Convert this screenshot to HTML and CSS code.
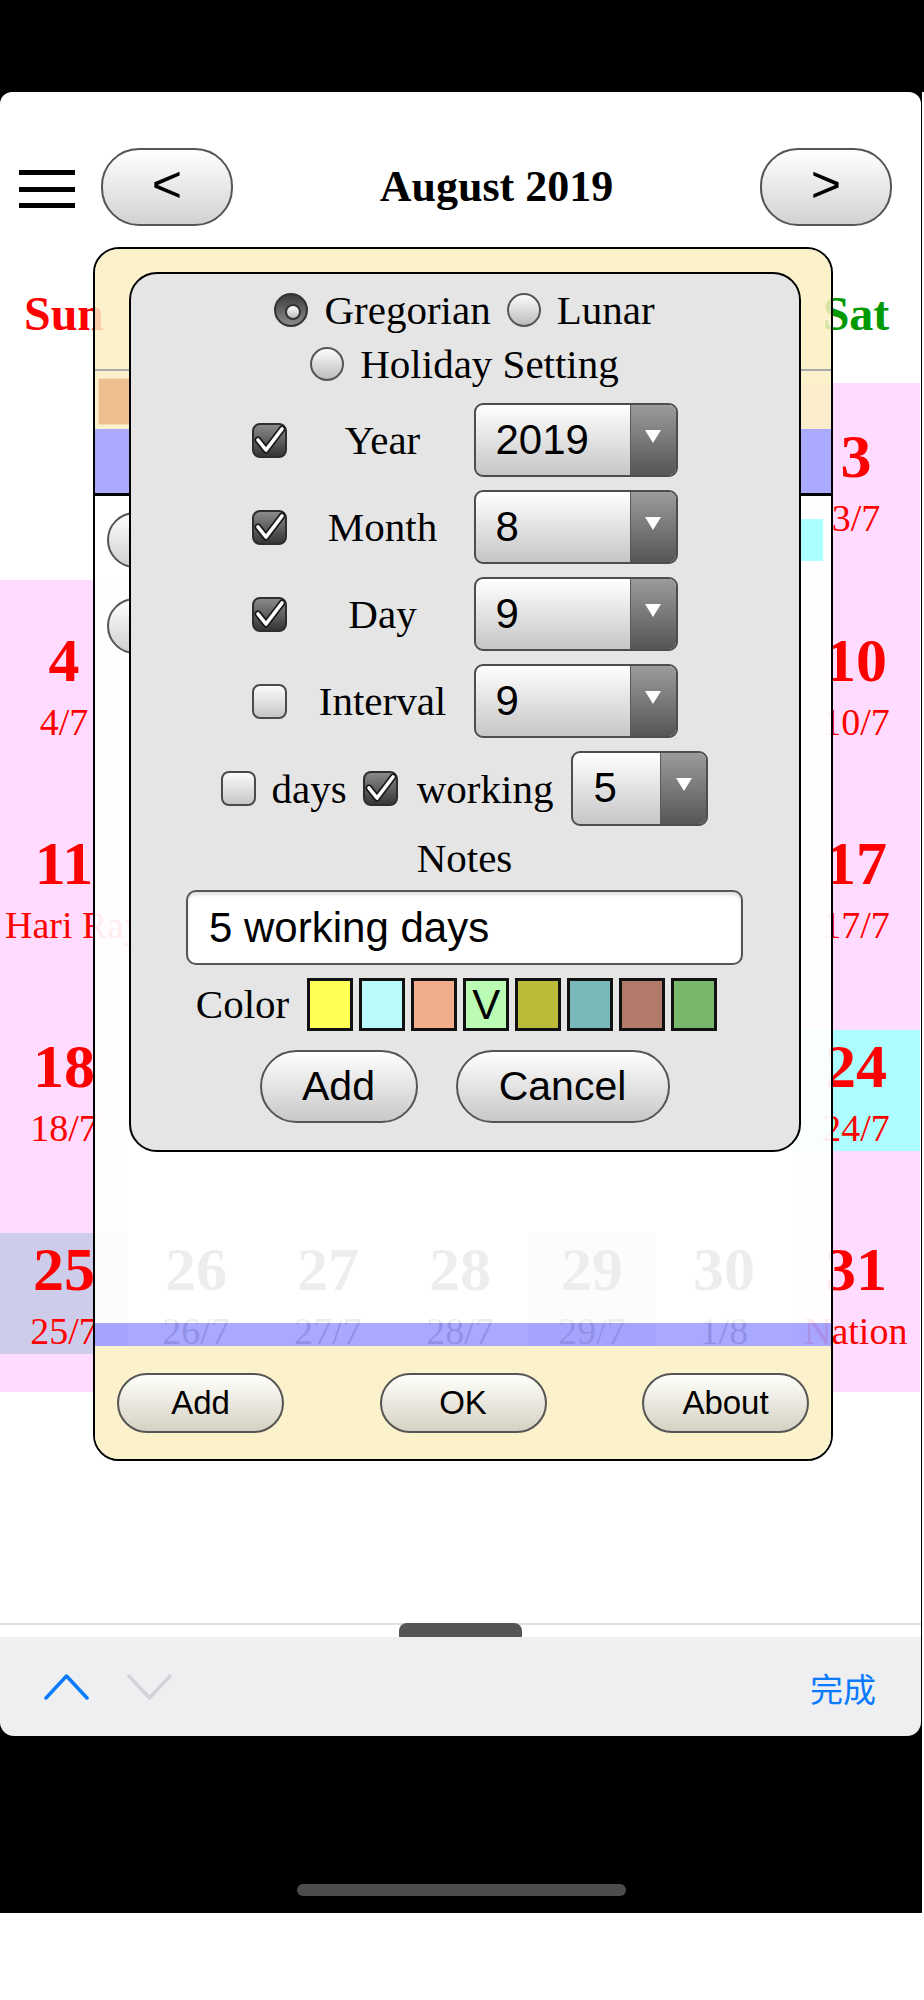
FILE: index.html
```html
<!DOCTYPE html>
<html>
<head>
<meta charset="utf-8">
<title>Calendar</title>
<link rel="stylesheet" href="styles.css">
</head>
<body>
<div class="screen">
  <div class="page">
    <header class="topbar">
      <div class="menu"><span></span><span></span><span></span></div>
      <button class="navbtn">&lt;</button>
      <h1 class="title">August 2019</h1>
      <button class="navbtn">&gt;</button>
    </header>

    <div class="weekhead">
      <div class="sun">Sun</div><div>Mon</div><div>Tue</div><div>Wed</div><div>Thu</div><div>Fri</div><div class="sat">Sat</div>
    </div>

    <div class="grid">
      <div class="cell r1"></div><div class="cell r1"></div><div class="cell r1"></div><div class="cell r1"></div>
      <div class="cell r1"><div class="day"><div class="num">1</div><div class="lun">1/7</div></div></div>
      <div class="cell r1"><div class="day"><div class="num">2</div><div class="lun">2/7</div></div></div>
      <div class="cell r1 we"><div class="day"><div class="num">3</div><div class="lun">3/7</div></div></div>

      <div class="cell we"><div class="day"><div class="num">4</div><div class="lun">4/7</div></div></div>
      <div class="cell"><div class="day"><div class="num">5</div><div class="lun">5/7</div></div></div>
      <div class="cell"><div class="day"><div class="num">6</div><div class="lun">6/7</div></div></div>
      <div class="cell"><div class="day"><div class="num">7</div><div class="lun">7/7</div></div></div>
      <div class="cell"><div class="day"><div class="num">8</div><div class="lun">8/7</div></div></div>
      <div class="cell"><div class="day"><div class="num">9</div><div class="lun">9/7</div></div></div>
      <div class="cell we"><div class="day"><div class="num">10</div><div class="lun">10/7</div></div></div>

      <div class="cell we"><div class="day"><div class="num">11</div><div class="lun">Hari Raya Haji</div></div></div>
      <div class="cell"><div class="day"><div class="num">12</div><div class="lun">12/7</div></div></div>
      <div class="cell"><div class="day"><div class="num">13</div><div class="lun">13/7</div></div></div>
      <div class="cell"><div class="day"><div class="num">14</div><div class="lun">14/7</div></div></div>
      <div class="cell"><div class="day"><div class="num">15</div><div class="lun">15/7</div></div></div>
      <div class="cell"><div class="day"><div class="num">16</div><div class="lun">16/7</div></div></div>
      <div class="cell we"><div class="day"><div class="num">17</div><div class="lun">17/7</div></div></div>

      <div class="cell we"><div class="day"><div class="num">18</div><div class="lun">18/7</div></div></div>
      <div class="cell"><div class="day"><div class="num">19</div><div class="lun">19/7</div></div></div>
      <div class="cell"><div class="day"><div class="num">20</div><div class="lun">20/7</div></div></div>
      <div class="cell"><div class="day"><div class="num">21</div><div class="lun">21/7</div></div></div>
      <div class="cell"><div class="day"><div class="num">22</div><div class="lun">22/7</div></div></div>
      <div class="cell"><div class="day"><div class="num">23</div><div class="lun">23/7</div></div></div>
      <div class="cell we"><div class="day cyan"><div class="num">24</div><div class="lun">24/7</div></div></div>

      <div class="cell we"><div class="day lav"><div class="num">25</div><div class="lun">25/7</div></div></div>
      <div class="cell"><div class="day"><div class="num">26</div><div class="lun">26/7</div></div></div>
      <div class="cell"><div class="day"><div class="num">27</div><div class="lun">27/7</div></div></div>
      <div class="cell"><div class="day"><div class="num">28</div><div class="lun">28/7</div></div></div>
      <div class="cell"><div class="day lav"><div class="num">29</div><div class="lun">29/7</div></div></div>
      <div class="cell"><div class="day"><div class="num">30</div><div class="lun">1/8</div></div></div>
      <div class="cell we"><div class="day"><div class="num">31</div><div class="lun clip">National Day</div></div></div>
    </div>

    <div class="dock"><span class="tab"></span></div>

    <div class="dialog">
      <div class="dlg-head"></div>
      <div class="dlg-tag"><span class="tagbox"></span></div>
      <div class="dlg-bar"></div>
      <div class="dlg-list">
        <div class="item"><span class="pill"></span><span class="itemcolor"></span></div>
        <div class="item"><span class="pill"></span></div>
      </div>
      <div class="dlg-bar2"></div>
      <div class="dlg-foot">
        <button class="fbtn">Add</button>
        <button class="fbtn">OK</button>
        <button class="fbtn">About</button>
      </div>

      <div class="panel">
        <div class="rline">
          <span class="radio on"></span><span class="rtext">Gregorian</span>
          <span class="radio"></span><span>Lunar</span>
        </div>
        <div class="rline">
          <span class="radio"></span><span>Holiday Setting</span>
        </div>

        <div class="opt first">
          <span class="cb on"><svg viewBox="0 0 31 31"><path d="M4 15 L12 25 L28 4"/><path class="w" d="M4 15 L12 25 L28 4"/></svg></span>
          <span class="lbl">Year</span>
          <div class="select"><span class="val">2019</span><span class="arr"></span></div>
        </div>
        <div class="opt">
          <span class="cb on"><svg viewBox="0 0 31 31"><path d="M4 15 L12 25 L28 4"/><path class="w" d="M4 15 L12 25 L28 4"/></svg></span>
          <span class="lbl">Month</span>
          <div class="select"><span class="val">8</span><span class="arr"></span></div>
        </div>
        <div class="opt">
          <span class="cb on"><svg viewBox="0 0 31 31"><path d="M4 15 L12 25 L28 4"/><path class="w" d="M4 15 L12 25 L28 4"/></svg></span>
          <span class="lbl">Day</span>
          <div class="select"><span class="val">9</span><span class="arr"></span></div>
        </div>
        <div class="opt">
          <span class="cb"></span>
          <span class="lbl">Interval</span>
          <div class="select"><span class="val">9</span><span class="arr"></span></div>
        </div>

        <div class="wrow">
          <span class="cb"></span>
          <span class="wtxt">days</span>
          <span class="cb on"><svg viewBox="0 0 31 31"><path d="M4 15 L12 25 L28 4"/><path class="w" d="M4 15 L12 25 L28 4"/></svg></span>
          <span class="wtxt wk">working</span>
          <div class="select small"><span class="val">5</span><span class="arr"></span></div>
        </div>

        <div class="notes">Notes</div>
        <input class="textbox" type="text" value="5 working days">

        <div class="colors">
          <span class="clab">Color</span>
          <span class="sw c1"></span>
          <span class="sw c2"></span>
          <span class="sw c3"></span>
          <span class="sw c4">V</span>
          <span class="sw c5"></span>
          <span class="sw c6"></span>
          <span class="sw c7"></span>
          <span class="sw c8"></span>
        </div>

        <div class="actions">
          <button class="btn add">Add</button>
          <button class="btn cancel">Cancel</button>
        </div>
      </div>
    </div>
  </div>

  <div class="accessory">
    <svg class="chev" width="45" height="26" viewBox="0 0 45 26"><polyline points="2,24 22.5,2 43,24"/></svg>
    <svg class="chev dn" width="45" height="26" viewBox="0 0 45 26"><polyline points="2,2 22.5,24 43,2"/></svg>
    <span class="done">完成</span>
  </div>
  <div class="homezone"><span></span></div>
</div>
</body>
</html>
```

FILE: styles.css
```css
* { box-sizing: border-box; }
html, body { margin: 0; }
body {
  width: 924px;
  background: linear-gradient(#000 0, #000 92px, #fff 92px) no-repeat;
  font-family: "Liberation Serif", serif;
  color: #000;
}

.screen {
  width: 922px;
  background: #000;
  padding-top: 92px;
}

.page {
  width: 921px;
  height: 1545px;
  background: #fff;
  border-radius: 12px 12px 0 0;
  position: relative;
  overflow: hidden;
  display: flex;
  flex-direction: column;
}

/* top bar */
.topbar {
  display: flex;
  align-items: center;
  height: 78px;
  margin-top: 56px;
  padding: 0 29px 0 19px;
  flex: none;
}
.menu {
  width: 56px;
  display: flex;
  flex-direction: column;
  gap: 11.5px;
  margin-right: 26px;
  margin-top: 4px;
}
.menu span { display: block; height: 5px; background: #000; }
.navbtn {
  width: 132px;
  height: 78px;
  padding: 0 0 6px;
  border: 2px solid #555;
  border-radius: 38px;
  background: linear-gradient(#ffffff, #d2d2d2);
  font: 52px/1 "Liberation Sans", sans-serif;
  color: #000;
}
.title {
  flex: 1;
  margin: 0;
  text-align: center;
  font: bold 44px/50px "Liberation Serif", serif;
}

/* calendar */
.weekhead {
  display: grid;
  grid-template-columns: repeat(7, 128px);
  column-gap: 4px;
  margin-top: 58px;
  height: 60px;
  flex: none;
  font: bold 48px/60px "Liberation Serif", serif;
  text-align: center;
}
.sun { color: #ff0000; }
.sat { color: #009900; }

.grid {
  display: grid;
  grid-template-columns: repeat(7, 128px);
  grid-template-rows: 197px repeat(4, 203px);
  column-gap: 4px;
  margin-top: 39px;
  flex: none;
}
.cell { padding-top: 44px; }
.cell.r1 { padding-top: 37px; }
.cell.we { background: #ffdcff; }
.day {
  height: 121px;
  text-align: center;
  white-space: nowrap;
}
.day.cyan { background: #adffff; }
.day.lav { background: #cdcdeb; }
.num { font: bold 62px/72px "Liberation Serif", serif; }
.lun { font: 38px/52px "Liberation Serif", serif; padding: 0 5px; }
.we .num, .we .lun { color: #ff0000; }
.lun.clip { padding: 0 0 0 12px; margin-right: 13px; overflow: hidden; text-align: left; }

.dock {
  margin-top: auto;
  height: 14px;
  flex: none;
  display: flex;
  background: linear-gradient(#e0e0e0 0, #e0e0e0 2px, #fff 2px);
}
.dock .tab {
  margin-left: 399px;
  width: 123px;
  height: 14px;
  background: #555;
  border-radius: 8px 8px 0 0;
}

/* outer dialog */
.dialog {
  position: absolute;
  left: 93px;
  top: 155px;
  width: 740px;
  height: 1214px;
  border: 2px solid #000;
  border-radius: 26px;
  overflow: hidden;
  display: flex;
  flex-direction: column;
}
.dlg-head {
  height: 122px;
  flex: none;
  background: rgba(250, 240, 195, 0.85);
  border-bottom: 2px solid #aaa;
}
.dlg-tag {
  height: 58px;
  flex: none;
  background: rgba(250, 240, 195, 0.85);
  padding: 7px 0 0 3px;
}
.tagbox {
  display: block;
  width: 60px;
  height: 47px;
  background: #efc08f;
  border: 1px solid #f6dcb4;
}
.dlg-bar {
  height: 67px;
  flex: none;
  background: #aaaaff;
  border-bottom: 3px solid #000;
}
.dlg-list {
  flex: 1;
  background: rgba(255, 255, 255, 0.93);
  padding-top: 16px;
}
.item {
  height: 56px;
  display: flex;
  align-items: center;
  margin-bottom: 30px;
}
.pill {
  margin-left: 12px;
  width: 220px;
  height: 56px;
  border: 2px solid #555;
  border-radius: 28px;
  background: linear-gradient(#ffffff, #d0d0d0);
}
.itemcolor {
  margin-left: auto;
  margin-right: 8px;
  width: 60px;
  height: 42px;
  background: #aaffff;
}
.dlg-bar2 {
  height: 23px;
  flex: none;
  background: rgba(160, 160, 255, 0.9);
}
.dlg-foot {
  height: 113px;
  flex: none;
  background: #fbf2cc;
  display: flex;
  justify-content: space-between;
  align-items: flex-start;
  padding: 27px 22px 0;
}
.fbtn {
  width: 167px;
  height: 60px;
  padding: 0;
  border: 2px solid #555;
  border-radius: 30px;
  background: linear-gradient(#fffffb, #d5d1c2);
  font: 33px/56px "Liberation Sans", sans-serif;
  color: #000;
}

/* inner panel */
.panel {
  position: absolute;
  left: 33.5px;
  top: 23px;
  width: 672px;
  height: 880px;
  background: #e5e5e5;
  border: 2px solid #000;
  border-radius: 28px;
  padding-top: 9px;
  display: flex;
  flex-direction: column;
  align-items: center;
  font: 41px/54px "Liberation Serif", serif;
}
.rline {
  height: 54px;
  display: flex;
  align-items: center;
}
.rline .rtext { margin-right: 16px; }
.radio {
  position: relative;
  flex: none;
  width: 34px;
  height: 34px;
  border-radius: 50%;
  border: 2px solid #555;
  background: linear-gradient(#fdfdfd, #bcbcbc);
  margin-right: 16px;
}
.radio.on {
  border-color: #333;
  background: linear-gradient(#3c3c3c, #8c8c8c);
}
.radio.on::after {
  content: "";
  position: absolute;
  left: 9px;
  top: 9px;
  width: 12px;
  height: 12px;
  border-radius: 50%;
  border: 2px solid #333;
  background: linear-gradient(#fff, #bbb);
}

.opt {
  display: flex;
  align-items: center;
  height: 74px;
  margin-top: 13px;
}
.opt.first { margin-top: 12px; }
.cb {
  flex: none;
  width: 35px;
  height: 35px;
  border: 2px solid #4a4a4a;
  border-radius: 8px;
  background: linear-gradient(#fbfbfb, #c6c6c6);
  display: flex;
}
.cb.on {
  border-color: #2e2e2e;
  background: linear-gradient(#8a8a8a, #363636);
}
.cb svg { width: 31px; height: 31px; }
.cb svg path {
  fill: none;
  stroke: #1a1a1a;
  stroke-width: 7;
  stroke-linecap: round;
  stroke-linejoin: round;
}
.cb svg path.w { stroke: #fff; stroke-width: 3.6; }
.lbl {
  width: 174px;
  margin: 0 4px 0 9px;
  text-align: center;
  line-height: 74px;
}
.select {
  flex: none;
  width: 204px;
  height: 74px;
  border: 2px solid #4d4d4d;
  border-radius: 9px;
  display: flex;
  overflow: hidden;
  background: linear-gradient(#ffffff, #c6c6c6);
}
.select.small { width: 137px; }
.select .val {
  flex: 1;
  padding-left: 20px;
  font: 42px/70px "Liberation Sans", sans-serif;
}
.select .arr {
  flex: none;
  width: 46px;
  background: linear-gradient(#9b9b9b, #565656);
  border-left: 1px solid #5a5a5a;
  display: flex;
  justify-content: center;
  align-items: flex-start;
  padding-top: 25px;
}
.select .arr::after {
  content: "";
  width: 0;
  height: 0;
  border-left: 8px solid transparent;
  border-right: 8px solid transparent;
  border-top: 13px solid #fff;
}

.wrow {
  display: flex;
  align-items: center;
  height: 75px;
  margin-top: 13px;
}
.wrow .cb { margin-right: 16px; }
.wrow .cb.on { margin-right: 19px; }
.wtxt { margin-right: 16px; }
.wtxt.wk { margin-right: 18px; }
.wrow .select { height: 75px; }

.notes { margin-top: 5px; line-height: 54px; }
.textbox {
  margin-top: 5px;
  width: 557px;
  height: 75px;
  border: 2px solid #555;
  border-radius: 10px;
  background: #fff;
  box-shadow: inset 0 3px 3px rgba(0, 0, 0, 0.12);
  padding: 0 0 0 21px;
  font: 42px "Liberation Sans", sans-serif;
  color: #000;
  outline: none;
}

.colors {
  margin-top: 13px;
  height: 53px;
  display: flex;
  align-items: center;
  padding-right: 16px;
}
.clab { margin-right: 12px; line-height: 53px; }
.sw {
  width: 46px;
  height: 53px;
  border: 3px solid #111;
  margin-left: 6px;
  font: 42px/47px "Liberation Sans", sans-serif;
  text-align: center;
}
.c1 { background: #ffff55; }
.c2 { background: #bbfafa; }
.c3 { background: #f2ad8c; }
.c4 { background: #bbfbb3; }
.c5 { background: #bbbb3a; }
.c6 { background: #79b9b9; }
.c7 { background: #b27a68; }
.c8 { background: #78b86d; }

.actions {
  margin-top: 19px;
  display: flex;
  gap: 38px;
}
.btn {
  height: 73px;
  padding: 0;
  border: 2px solid #555;
  border-radius: 37px;
  background: linear-gradient(#ffffff, #c8c8c8);
  font: 41px/69px "Liberation Sans", sans-serif;
  color: #000;
}
.btn.add { width: 158px; }
.btn.cancel { width: 214px; }

/* keyboard accessory */
.accessory {
  width: 921px;
  height: 99px;
  background: #eeeff1;
  border-radius: 0 0 14px 14px;
  display: flex;
  align-items: center;
  padding: 0 45px 0 44px;
}
.chev polyline {
  fill: none;
  stroke: #0a7aff;
  stroke-width: 3.5;
  stroke-linecap: round;
  stroke-linejoin: round;
}
.chev.dn { margin-left: 38px; }
.chev.dn polyline { stroke: #d3d3d8; }
.done {
  margin-left: auto;
  font: 33px/1 "Noto Sans CJK SC", sans-serif;
  color: #0a7aff;
  padding-top: 3px;
}

.homezone {
  height: 177px;
  display: flex;
  justify-content: center;
  padding-top: 148px;
}
.homezone span {
  width: 329px;
  height: 12px;
  border-radius: 6px;
  background: #4c4c4c;
}
```
